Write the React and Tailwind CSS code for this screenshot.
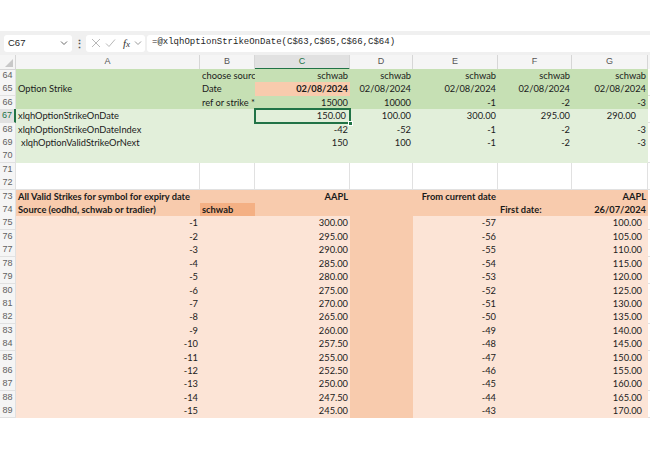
import React from "react";

const COLS = "grid grid-cols-[16px_184px_55px_95px_63px_85px_74px_76px_1fr] h-[13.42px]";

function RH({ n, active }) {
  return (
    <div
      className={`h-full border-b border-r border-[#e1e1e1] text-[9px] text-center leading-[13px] font-['Liberation_Sans',sans-serif] ${
        active ? "bg-[#e1e1e1] text-[#217346] border-r-[#217346] border-r-2" : "bg-[#f5f5f5] text-[#616161]"
      }`}
    >
      {n}
    </div>
  );
}

function C({ children, className = "" }) {
  return (
    <div className={`h-full overflow-hidden whitespace-nowrap leading-[13.42px] px-[2px] ${className}`}>
      {children}
    </div>
  );
}

const W = "bg-white border-r border-b border-[#e1e1e1]";
const G1 = "bg-[#c6e0b4]";
const G2 = "bg-[#e2efda]";
const O1 = "bg-[#f8cbad]";
const O2 = "bg-[#fce4d6]";
const O3 = "bg-[#f4b084]";

const strikes = [
  ["-1", "300.00", "-57", "100.00"],
  ["-2", "295.00", "-56", "105.00"],
  ["-3", "290.00", "-55", "110.00"],
  ["-4", "285.00", "-54", "115.00"],
  ["-5", "280.00", "-53", "120.00"],
  ["-6", "275.00", "-52", "125.00"],
  ["-7", "270.00", "-51", "130.00"],
  ["-8", "265.00", "-50", "135.00"],
  ["-9", "260.00", "-49", "140.00"],
  ["-10", "257.50", "-48", "145.00"],
  ["-11", "255.00", "-47", "150.00"],
  ["-12", "252.50", "-46", "155.00"],
  ["-13", "250.00", "-45", "160.00"],
  ["-14", "247.50", "-44", "165.00"],
  ["-15", "245.00", "-43", "170.00"],
];

function Chevron({ className = "" }) {
  return (
    <svg width="8" height="6" viewBox="0 0 8 6" className={className}>
      <path d="M1 1.5 L4 4.5 L7 1.5" fill="none" stroke="currentColor" strokeWidth="1" />
    </svg>
  );
}

export default function App() {
  return (
    <div className="w-[650px] h-[450px] bg-white overflow-hidden text-[#1a1a1a] font-['Lato',sans-serif] text-[9.3px]">
      <div className="h-[31px] bg-white" />
      {/* formula bar */}
      <div className="h-[24px] bg-[#f0f0f0] flex items-center pl-[4px]">
        <div className="w-[68px] h-[17px] bg-white rounded-[3px] flex items-center justify-between pl-[4px] pr-[4px] text-[9.5px] font-['Liberation_Sans',sans-serif] text-[#262626]">
          <span>C67</span>
          <Chevron className="text-[#6b6b6b]" />
        </div>
        <div className="w-[14px] flex justify-center text-[#555] text-[11px] leading-none font-bold">⋮</div>
        <div className="w-[59px] h-[17px] bg-white rounded-[3px] flex items-center pl-[5px] gap-[4px] text-[#b8b8b8]">
          <svg width="10" height="10" viewBox="0 0 10 10">
            <path d="M1 1 L9 9 M9 1 L1 9" stroke="currentColor" strokeWidth="1" />
          </svg>
          <svg width="11" height="10" viewBox="0 0 11 10">
            <path d="M1 5.5 L4 8.5 L10 1.5" fill="none" stroke="currentColor" strokeWidth="1" />
          </svg>
          <span className="ml-[3px] italic font-['Liberation_Serif',serif] text-[11px] text-[#333] leading-none">
            f<span className="text-[9px]">x</span>
          </span>
          <Chevron className="text-[#9a9a9a]" />
        </div>
        <div className="ml-[2px] flex-1 h-[17px] bg-white rounded-l-[3px] flex items-center pl-[5px] font-['Liberation_Mono',monospace] text-[9px] text-[#1f1f1f]">
          =@xlqhOptionStrikeOnDate(C$63,C$65,C$66,C$64)
        </div>
      </div>
      {/* column headers */}
      <div className="grid grid-cols-[16px_184px_55px_95px_63px_85px_74px_76px_1fr] h-[14px] bg-[#f5f5f5] text-[9px] text-[#555] font-['Liberation_Sans',sans-serif]">
        <div className="relative border-r border-b border-[#d6d6d6]">
          <svg width="8" height="8" viewBox="0 0 8 8" className="absolute right-[2px] bottom-[2px]">
            <path d="M8 0 L8 8 L0 8 Z" fill="#c8c8c8" />
          </svg>
        </div>
        {["A", "B", "C", "D", "E", "F", "G"].map((l) => (
          <div
            key={l}
            className={`text-center leading-[13px] border-r border-[#d6d6d6] ${
              l === "C" ? "bg-[#e1e1e1] text-[#217346] border-b-2 border-b-[#217346]" : "border-b"
            }`}
          >
            {l}
          </div>
        ))}
        <div className="border-b border-[#d6d6d6]" />
      </div>

      {/* row 64 */}
      <div className={COLS}>
        <RH n="64" />
        <C className={G1} />
        <C className={G1}>choose sourc</C>
        <C className={`${G1} text-right`}>schwab</C>
        <C className={`${G1} text-right`}>schwab</C>
        <C className={`${G1} text-right`}>schwab</C>
        <C className={`${G1} text-right`}>schwab</C>
        <C className={`${G1} text-right`}>schwab</C>
        <C className={W} />
      </div>
      {/* row 65 */}
      <div className={COLS}>
        <RH n="65" />
        <C className={G1}>Option Strike</C>
        <C className={G1}>Date</C>
        <C className={`${O1} text-right font-bold`}>02/08/2024</C>
        <C className={`${G1} text-right`}>02/08/2024</C>
        <C className={`${G1} text-right`}>02/08/2024</C>
        <C className={`${G1} text-right`}>02/08/2024</C>
        <C className={`${G1} text-right`}>02/08/2024</C>
        <C className={W} />
      </div>
      {/* row 66 */}
      <div className={COLS}>
        <RH n="66" />
        <C className={G1} />
        <C className={G1}>ref or strike *</C>
        <C className={`${G1} text-right`}>15000</C>
        <C className={`${G1} text-right`}>10000</C>
        <C className={`${G1} text-right`}>-1</C>
        <C className={`${G1} text-right`}>-2</C>
        <C className={`${G1} text-right`}>-3</C>
        <C className={W} />
      </div>
      {/* row 67 */}
      <div className={COLS}>
        <RH n="67" active />
        <C className={G2}>xlqhOptionStrikeOnDate</C>
        <C className={G2} />
        <div className={`${G2} relative h-full`}>
          <div className="absolute inset-[-1px] border-2 border-[#217346] text-right pr-[3px] leading-[11.5px] whitespace-nowrap">
            150.00
          </div>
          <div className="absolute right-[-3px] bottom-[-3px] w-[5px] h-[5px] bg-[#217346] border border-white" />
        </div>
        <C className={`${G2} text-right`}>100.00</C>
        <C className={`${G2} text-right`}>300.00</C>
        <C className={`${G2} text-right`}>295.00</C>
        <C className={`${G2} text-right pr-[12px]`}>290.00</C>
        <C className={W} />
      </div>
      {/* row 68 */}
      <div className={COLS}>
        <RH n="68" />
        <C className={G2}>xlqhOptionStrikeOnDateIndex</C>
        <C className={G2} />
        <C className={`${G2} text-right`}>-42</C>
        <C className={`${G2} text-right`}>-52</C>
        <C className={`${G2} text-right`}>-1</C>
        <C className={`${G2} text-right`}>-2</C>
        <C className={`${G2} text-right`}>-3</C>
        <C className={W} />
      </div>
      {/* row 69 */}
      <div className={COLS}>
        <RH n="69" />
        <C className={`${G2} pl-[5px]`}>xlqhOptionValidStrikeOrNext</C>
        <C className={G2} />
        <C className={`${G2} text-right`}>150</C>
        <C className={`${G2} text-right`}>100</C>
        <C className={`${G2} text-right`}>-1</C>
        <C className={`${G2} text-right`}>-2</C>
        <C className={`${G2} text-right`}>-3</C>
        <C className={W} />
      </div>
      {/* row 70 */}
      <div className={COLS}>
        <RH n="70" />
        <C className={G2} />
        <C className={G2} />
        <C className={G2} />
        <C className={G2} />
        <C className={G2} />
        <C className={G2} />
        <C className={G2} />
        <C className={W} />
      </div>
      {/* rows 71, 72 */}
      {["71", "72"].map((n) => (
        <div key={n} className={COLS}>
          <RH n={n} />
          <C className={W} />
          <C className={W} />
          <C className={W} />
          <C className={W} />
          <C className={W} />
          <C className={W} />
          <C className={W} />
          <C className={W} />
        </div>
      ))}
      {/* row 73 */}
      <div className={COLS}>
        <RH n="73" />
        <C className={`${O1} font-bold`}>All Valid Strikes for symbol for expiry date</C>
        <C className={O1} />
        <C className={`${O1} text-right font-bold`}>AAPL</C>
        <C className={O1} />
        <C className={`${O1} text-right font-bold`}>From current date</C>
        <C className={O1} />
        <C className={`${O1} text-right font-bold`}>AAPL</C>
        <C className={W} />
      </div>
      {/* row 74 */}
      <div className={COLS}>
        <RH n="74" />
        <C className={`${O1} font-bold`}>Source (eodhd, schwab or tradier)</C>
        <C className={`${O3} font-bold`}>schwab</C>
        <C className={O1} />
        <C className={O1} />
        <C className={O1} />
        <C className={`${O1} font-bold`}>First date:</C>
        <C className={`${O1} text-right font-bold`}>26/07/2024</C>
        <C className={W} />
      </div>
      {strikes.map((r, i) => (
        <div key={i} className={COLS}>
          <RH n={String(75 + i)} />
          <C className={`${O2} text-right`}>{r[0]}</C>
          <C className={O2} />
          <C className={`${O2} text-right`}>{r[1]}</C>
          <C className={O1} />
          <C className={`${O2} text-right`}>{r[2]}</C>
          <C className={O2} />
          <C className={`${O2} text-right pr-[6px]`}>{r[3]}</C>
          <C className={W} />
        </div>
      ))}
    </div>
  );
}
